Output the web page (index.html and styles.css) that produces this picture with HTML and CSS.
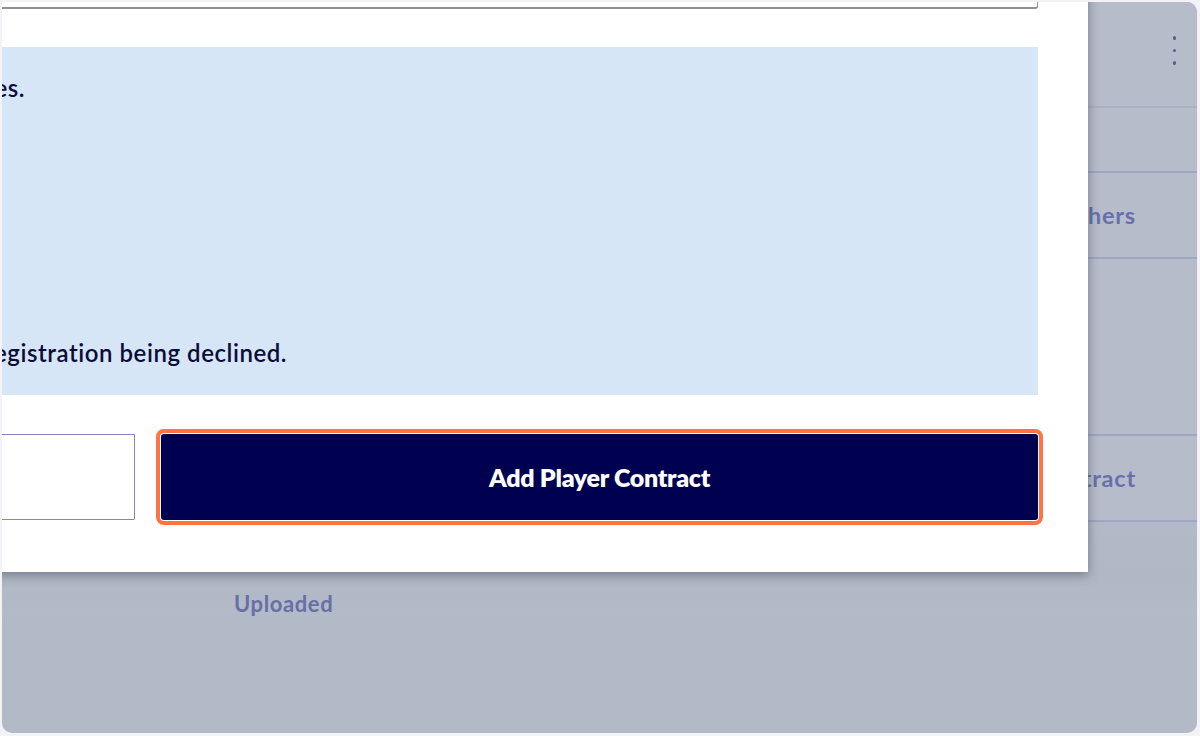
FILE: index.html
```html
<!DOCTYPE html>
<html lang="en">
<head>
<meta charset="utf-8">
<title>Add Player Contract</title>
<link rel="stylesheet" href="styles.css">
</head>
<body>
<div class="frame">
  <div class="page">
    <div class="row row-head">
      <div class="kebab" aria-label="More options"><span></span><span></span><span></span></div>
    </div>
    <div class="row row-sub"></div>
    <div class="row row-cell"><span class="cell-text">Others</span></div>
    <div class="row row-tall"></div>
    <div class="row row-cell row-line"><span class="cell-text">Player Contract</span></div>
    <div class="row row-foot"><span class="status">Uploaded</span></div>
  </div>

  <div class="modal" role="dialog">
    <div class="field"></div>
    <div class="info">
      <p class="info-line info-first">Please upload the signed contract including all relevant signatures.</p>
      <p class="info-line info-last">Incomplete contracts may result in the registration being declined.</p>
    </div>
    <div class="actions">
      <button class="btn btn-outline" type="button" aria-label="Cancel"></button>
      <button class="btn btn-primary" type="button">Add Player Contract</button>
    </div>
  </div>
</div>
</body>
</html>
```
FILE: styles.css
```css
* { box-sizing: border-box; }

html, body {
  margin: 0;
  padding: 0;
  background: #f3f3f7;
  font-family: Lato, "Open Sans", sans-serif;
}

.frame {
  position: relative;
  margin: 2px 3px 0 2px;
  width: 1195px;
  height: 731px;
  border-radius: 0 10px 10px 10px;
  overflow: hidden;
  background: #b3bac7;
}

/* background page (dimmed by overlay) */
.page {
  display: flex;
  flex-direction: column;
}

.row {
  border-bottom: 2px solid #9ea5c6;
}

.row-head {
  height: 106px;
  border-bottom: 2px solid #abb1c2;
  background: #b6bcc9;
  display: flex;
  justify-content: flex-end;
  padding: 34px 21px 0 0;
}

.kebab {
  display: flex;
  flex-direction: column;
  gap: 9px;
}
.kebab span {
  width: 3.5px;
  height: 3.5px;
  border-radius: 50%;
  background: #59618f;
}

.row-sub {
  height: 65px;
  background: #b6bcc9;
}

.row-cell {
  height: 86px;
  display: flex;
  align-items: center;
  justify-content: flex-end;
  padding-right: 61px;
  background: #b6bcc9;
}

.row-tall {
  height: 177px;
  background: #b6bcc9;
}

.cell-text {
  font-weight: 700;
  font-size: 23.5px;
  letter-spacing: 0.8px;
  color: #6870ac;
}

.row-foot {
  border-bottom: none;
  flex: 1;
  height: 212px;
  padding: 68px 0 0 232px;
  background: linear-gradient(#b3bac7 0, #b1b8c5 60%, #b4bbc8 100%);
}

.status {
  font-weight: 700;
  font-size: 22px;
  letter-spacing: 0.6px;
  color: #676fa6;
}

/* modal */
.modal {
  position: absolute;
  left: -768px;
  top: -100px;
  width: 1854px;
  padding: 13px 50px 52px 24px;
  background: #ffffff;
  box-shadow: 0 3px 10px rgba(40, 44, 60, 0.45);
  display: flex;
  flex-direction: column;
}

.field {
  height: 94px;
  border: 1px solid #8e8e98;
  border-bottom-width: 2px;
  border-radius: 0 0 3px 0;
}

.info {
  margin-top: 38px;
  height: 348px;
  background: #d6e6f6;
  padding: 28px 24px 0 24px;
  color: #0c0c3a;
  font-size: 24px;
  font-weight: 600;
  letter-spacing: 0.55px;
}

.info-line {
  margin: 0;
  line-height: 26px;
  white-space: nowrap;
  text-align: right;
}
.info-first { width: 743px; }
.info-last { width: 1005px; margin-top: 239px; }

.actions {
  margin-top: 39px;
  display: grid;
  grid-template-columns: 1fr 1fr;
  gap: 26px;
}

.btn {
  height: 86px;
  font-family: Lato, "Open Sans", sans-serif;
  font-weight: 800;
  font-size: 25px;
  cursor: pointer;
}

.btn-outline {
  background: #ffffff;
  border: 1px solid #8582cc;
  border-radius: 1px;
}

.btn-primary {
  background: #000050;
  color: #ffffff;
  border: none;
  border-radius: 3px;
  letter-spacing: -0.3px;
  box-shadow: 0 0 0 1px #ffffff, 0 0 0 5px #ff7442;
}
```
